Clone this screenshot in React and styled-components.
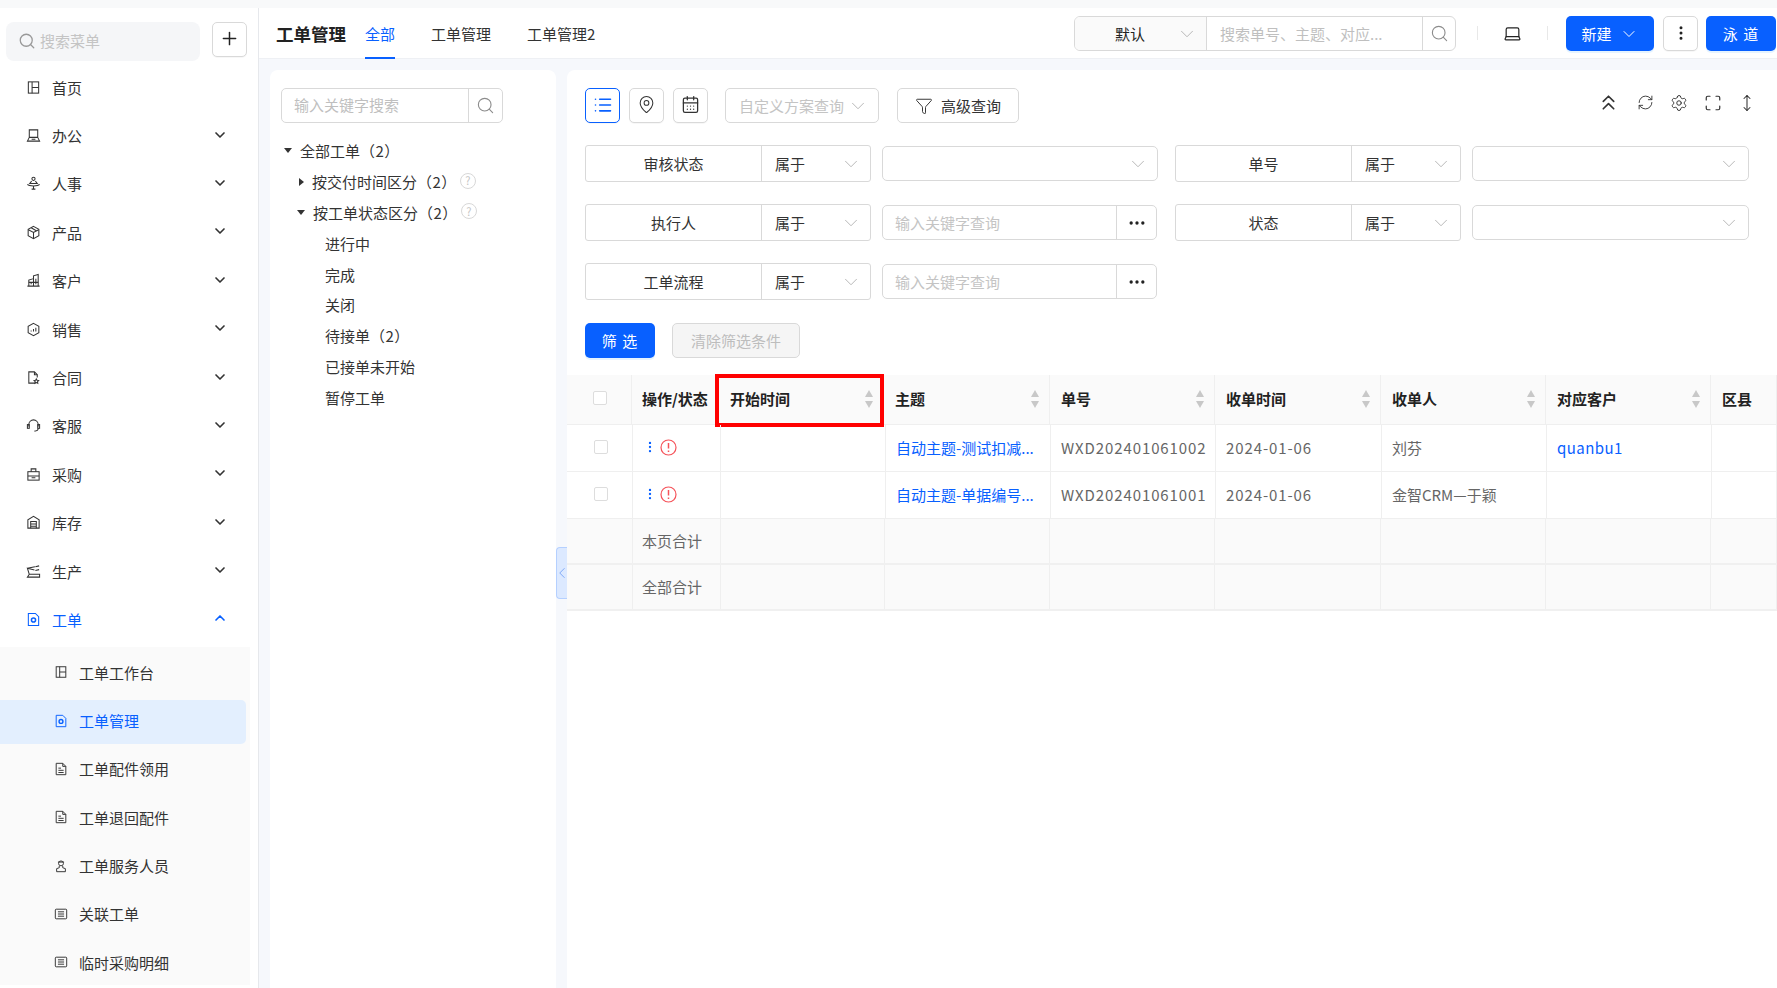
import React from 'react'
import styled, { createGlobalStyle } from 'styled-components'
import { Search, Plus, ChevronDown, ChevronUp, ChevronLeft, Laptop, EllipsisVertical, Ellipsis, List, MapPin, CalendarDays, Funnel, ChevronsUp, RefreshCw, Settings, Maximize, MoveVertical } from 'lucide-react'

const BLUE = '#0860ff'

const GlobalStyle = createGlobalStyle`
  html, body {
    margin: 0;
    height: 100%;
    overflow: hidden;
    background: #fff;
    color: #333;
    font-family: "Noto Sans CJK SC", "Noto Sans", sans-serif;
    font-size: 15px;
  }
  * { box-sizing: border-box; }
`

const Page = styled.div`
  height: 988px;
  display: flex;
  flex-direction: column;
`
const TopStrip = styled.div`
  height: 8px;
  flex: none;
  background: #f8f9fa;
`
const Shell = styled.div`
  flex: 1;
  display: flex;
  min-height: 0;
`

/* sidebar */
const Sidebar = styled.aside`
  width: 259px;
  flex: none;
  border-right: 1px solid #e6e8ec;
  overflow: hidden;
`
const SideSearchRow = styled.div`
  display: flex;
  align-items: flex-start;
  gap: 12px;
  padding: 14px 11px 2px 6px;
`
const SideSearch = styled.div`
  width: 194px;
  height: 39px;
  display: flex;
  align-items: center;
  gap: 4px;
  padding: 0 0 2px 12px;
  border-radius: 8px;
  background: #f5f6f8;
  color: #c4c4c4;
  svg { color: #999; }
`
const SquareButton = styled.button`
  width: 35px;
  height: 35px;
  padding: 0 0 2px;
  display: flex;
  align-items: center;
  justify-content: center;
  background: #fff;
  color: #222;
  border: 1px solid #d9d9d9;
  border-radius: 5px;
  box-shadow: 0 1px 0 rgba(0, 0, 0, 0.03);
`
const MenuRow = styled.div`
  height: 48.4px;
  display: flex;
  align-items: center;
  gap: 11px;
  padding: 0 30px 0 26px;
  color: ${p => (p.$active ? BLUE : '#333')};
  svg.caret { margin-left: auto; margin-top: -2px; color: ${p => (p.$active ? BLUE : '#333')}; }
`
const SubMenu = styled.div`
  width: 250px;
  margin-top: 3px;
  padding-top: 4.5px;
  display: flex;
  flex-direction: column;
  gap: 4.33px;
  background: #fafafa;
`
const SubRow = styled.div`
  width: 246px;
  height: 44px;
  display: flex;
  align-items: center;
  gap: 11px;
  padding: 0 0 2px 54px;
  border-radius: 0 5px 5px 0;
  color: ${p => (p.$active ? BLUE : '#333')};
  background: ${p => (p.$active ? '#e3effe' : 'transparent')};
`

/* header */
const Main = styled.main`
  flex: 1;
  min-width: 0;
  display: flex;
  flex-direction: column;
`
const Header = styled.header`
  height: 51px;
  flex: none;
  display: flex;
  align-items: flex-start;
  padding: 8px 1px 0 17px;
  border-bottom: 1px solid #eef0f4;
`
const Title = styled.div`
  font-size: 17.5px;
  font-weight: 700;
  line-height: 35px;
  color: #222;
  margin-right: 19px;
`
const Tabs = styled.div`
  display: flex;
  gap: 36px;
`
const Tab = styled.div`
  height: 43px;
  line-height: 35px;
  color: ${p => (p.$active ? BLUE : '#333')};
  border-bottom: 2px solid ${p => (p.$active ? BLUE : 'transparent')};
`
const HeaderTools = styled.div`
  margin-left: auto;
  display: flex;
  align-items: flex-start;
`
const CompoundSearch = styled.div`
  width: 382px;
  height: 35px;
  display: flex;
  border: 1px solid #d9d9d9;
  border-radius: 6px;
  overflow: hidden;
`
const ModeSelect = styled.div`
  width: 132px;
  flex: none;
  display: flex;
  align-items: center;
  padding: 0 8px 0 40px;
  justify-content: space-between;
  background: #fafafa;
  border-right: 1px solid #d9d9d9;
  color: #222;
`
const KeywordText = styled.div`
  flex: 1;
  min-width: 0;
  padding-left: 13px;
  line-height: 33px;
  color: #bfbfbf;
  white-space: nowrap;
  overflow: hidden;
`
const SearchCap = styled.div`
  width: ${p => p.$w}px;
  flex: none;
  display: flex;
  align-items: center;
  justify-content: center;
  border-left: 1px solid #d9d9d9;
  color: #8c8c8c;
`
const Sep = styled.div`
  width: 1px;
  height: 14px;
  margin: 10px ${p => p.$right || 0}px 0 ${p => p.$left || 0}px;
  background: #e8e8e8;
`
const LaptopSlot = styled.div`
  width: 69px;
  height: 35px;
  display: flex;
  align-items: center;
  justify-content: center;
  color: #222;
`
const PrimaryButton = styled.button`
  height: 35px;
  width: ${p => p.$w}px;
  padding: 0;
  display: flex;
  align-items: center;
  justify-content: center;
  gap: 7px;
  font: inherit;
  color: #fff;
  white-space: pre;
  background: ${BLUE};
  border: 0;
  border-radius: 5px;
  box-shadow: 0 2px 0 rgba(5, 145, 255, 0.1);
  letter-spacing: ${p => p.$spaced || 0}px;
`
const GhostButton = styled(SquareButton)`
  margin: 0 8px 0 9px;
  color: #222;
`

/* content */
const Content = styled.div`
  flex: 1;
  min-height: 0;
  display: flex;
  gap: 11px;
  padding: 11px 0 0 11px;
  background: #f6f8fc;
`
const TreePanel = styled.section`
  width: 286px;
  flex: none;
  padding: 18px 11px;
  background: #fff;
  border-radius: 8px 8px 0 0;
`
const TreeSearch = styled.div`
  width: 222px;
  height: 35px;
  display: flex;
  border: 1px solid #d9d9d9;
  border-radius: 5px;
  margin-bottom: 12.5px;
`
const TreeSearchText = styled.div`
  flex: 1;
  padding-left: 12px;
  line-height: 32px;
  color: #bfbfbf;
`
const TreeRow = styled.div`
  height: 30.8px;
  display: flex;
  align-items: center;
  padding-left: ${p => p.$indent}px;
  color: #333;
  white-space: nowrap;
`
const Arrow = styled.i`
  width: 0;
  height: 0;
  margin-right: 8px;
  border-style: solid;
  border-color: transparent;
  ${p => p.$open
    ? 'border-width: 5px 4px 0; border-top-color: #333; margin-left: -1px;'
    : 'border-width: 4px 0 4px 5px; border-left-color: #333; margin-left: 1px;'}
`
const Count = styled.span`
  letter-spacing: 0.5px;
`
const HelpMark = styled.span`
  width: 16px;
  height: 16px;
  margin: -2px 0 0 3px;
  display: inline-flex;
  align-items: center;
  justify-content: center;
  border: 1.5px solid #d8d8d8;
  border-radius: 50%;
  color: #c4c4c4;
  font-size: 11px;
  line-height: 1;
`
const ListPanel = styled.section`
  position: relative;
  flex: 1;
  min-width: 0;
  background: #fff;
  border-radius: 8px 0 0 0;
`
const Collapse = styled.div`
  position: absolute;
  left: -11px;
  top: 477px;
  width: 11px;
  height: 52px;
  display: flex;
  align-items: center;
  justify-content: center;
  background: #dce9ff;
  border: 1px solid #b5d0ff;
  border-right: 0;
  border-radius: 4px 0 0 4px;
  color: #7ea9f7;
  svg { flex: none; }
`
const Toolbar = styled.div`
  display: flex;
  align-items: flex-start;
  height: 35px;
  margin: 18px 21px 22px 18px;
`
const ViewButton = styled(SquareButton)`
  margin-right: 9px;
  color: ${p => (p.$active ? BLUE : '#333')};
  border-color: ${p => (p.$active ? BLUE : '#d9d9d9')};
`
const PlanSelect = styled.div`
  width: 154px;
  height: 35px;
  margin-left: 8px;
  display: flex;
  align-items: center;
  justify-content: space-between;
  padding: 0 9px 0 13px;
  border: 1px solid #d9d9d9;
  border-radius: 5px;
  color: #c4c4c4;
  white-space: nowrap;
`
const AdvancedButton = styled.button`
  width: 122px;
  height: 35px;
  margin-left: 18px;
  padding: 0;
  display: flex;
  align-items: center;
  justify-content: center;
  gap: 8px;
  font: inherit;
  color: #333;
  background: #fff;
  border: 1px solid #d9d9d9;
  border-radius: 5px;
`
const TableTools = styled.div`
  margin-left: auto;
  display: flex;
  align-items: center;
  gap: 16px;
  height: 29px;
  color: #333;
`
const FilterGrid = styled.div`
  display: grid;
  grid-template-columns: 573px 574px;
  column-gap: 17px;
  row-gap: 22px;
  padding-left: 18px;
`
const FilterField = styled.div`
  display: flex;
  align-items: center;
  gap: 11px;
  height: 37px;
`
const FieldBox = styled.div`
  width: 286px;
  height: 37px;
  flex: none;
  display: flex;
  border: 1px solid #d9d9d9;
  border-radius: 3px;
`
const FieldLabel = styled.div`
  width: 176px;
  flex: none;
  line-height: 35px;
  text-align: center;
  border-right: 1px solid #d9d9d9;
  color: #333;
`
const OpSelect = styled.div`
  flex: 1;
  display: flex;
  align-items: center;
  justify-content: space-between;
  padding: 0 8px 0 13px;
  color: #333;
`
const ValueSelect = styled.div`
  width: 277px;
  height: 35px;
  display: flex;
  align-items: center;
  justify-content: flex-end;
  padding-right: 8px;
  border: 1px solid #d9d9d9;
  border-radius: 5px;
`
const ValueInput = styled.div`
  width: 275px;
  height: 35px;
  display: flex;
  border: 1px solid #d9d9d9;
  border-radius: 5px;
`
const ValueText = styled.div`
  flex: 1;
  padding-left: 12px;
  line-height: 33px;
  color: #c4c4c4;
`
const MoreCap = styled.div`
  width: 40px;
  display: flex;
  align-items: center;
  justify-content: center;
  border-left: 1px solid #d9d9d9;
  color: #222;
`
const FilterActions = styled.div`
  display: flex;
  gap: 17px;
  margin: 23px 0 17px 18px;
`
const ClearButton = styled.button`
  width: 128px;
  height: 35px;
  padding: 0;
  font: inherit;
  color: #bdbdbd;
  background: #f5f5f5;
  border: 1px solid #d9d9d9;
  border-radius: 5px;
`
const TableRow = styled.div`
  display: grid;
  grid-template-columns: ${p => p.$cols};
  height: ${p => p.$h}px;
  background: ${p => p.$bg || '#fff'};
  border-bottom: ${p => p.$rule || 1}px solid ${p => (p.$rule ? '#f0f0f0' : '#efefef')};
`
const Cell = styled.div`
  position: relative;
  min-width: 0;
  display: flex;
  align-items: center;
  gap: 3px;
  padding: 0 10px 2px;
  border-right: 1px solid #efefef;
  color: ${p => (p.$link ? BLUE : '#666')};
  white-space: nowrap;
  overflow: hidden;
  letter-spacing: ${p => p.$track || 0}px;
`
const SumCell = styled(Cell)`
  padding-left: 9px;
`
const CheckCell = styled(Cell)`
  padding: 0 0 2px 2px;
  justify-content: center;
`
const HeadCell = styled(Cell)`
  padding: 0 ${p => (p.$boxed ? '12px' : '11px')} 2px;
  color: #222;
  font-weight: 600;
  overflow: visible;
  letter-spacing: 0;
  ${p => p.$boxed && `
    &::after {
      content: '';
      position: absolute;
      inset: -1px -1px -3px -3px;
      border: 4px solid #f00;
    }
  `}
`
const ActionHead = styled(HeadCell)`
  padding-left: 10px;
`
const SortMark = styled.span`
  position: absolute;
  right: 10px;
  top: 15px;
  display: flex;
  flex-direction: column;
  gap: 4px;
  &::before, &::after {
    content: '';
    width: 0;
    height: 0;
    border-style: solid;
    border-color: transparent;
  }
  &::before { border-width: 0 4px 7px; border-bottom-color: #c8c8c8; }
  &::after { border-width: 7px 4px 0; border-top-color: #c8c8c8; }
`
const Checkbox = styled.i`
  width: 14px;
  height: 14px;
  background: #fff;
  border: 1px solid #ddd;
  border-radius: 2px;
  margin-top: ${p => (p.$head ? -2 : 0)}px;
`
const Ellip = styled.span`
  overflow: hidden;
  text-overflow: ellipsis;
`
const GlyphSvg = styled.svg`
  flex: none;
  fill: none;
  stroke: currentColor;
  stroke-width: 1.1;
`

function Glyph({ name, size = 15 }) {
  const parts = {
    home: <><rect x="2.5" y="2" width="11" height="12" /><path d="M6.5 2v12M6.5 8h7" /></>,
    office: <><path d="M3.5 2h9v8h-9zM3.5 10l-2 4h13l-2-4" /><path d="M6 12h4" /></>,
    people: <><circle cx="8" cy="3" r="1.7" /><path d="M6 5.5l-2 2.5h8l-2-2.5M1.500 9c2 2.2 11 2.2 13 0M6 14h4M8 10.500V14" /></>,
    box: <><path d="M8 1.500l5.700 3.200v6.600L8 14.500l-5.700-3.200V4.700z" /><path d="M2.500 5L8 8l5.500-3M8 8v6.300M5.500 3l5.500 3.200" /></>,
    building: <><path d="M1.500 14h13M3 14V7.500l5-1.500M8 14V3l5-1.500V14" /><path d="M3 10h10M5.500 10v2M10.500 6v6" /></>,
    sales: <><path d="M8 1.500l5.700 3.200v6.600L8 14.500l-5.700-3.200V4.700z" /><path d="M5.500 10V9M8 10V7.500M10.500 10V6" /></>,
    contract: <><path d="M10 14H3V2h6l3 3v3" /><path d="M9 2v3h3M11 9.500l.8 1.500 1.700.3-1.200 1.200.3 1.700-1.600-.8-1.500.8.300-1.700-1.200-1.200 1.700-.3z" /></>,
    service: <><path d="M3 9V7a5 5 0 0 1 10 0v2" /><rect x="1.500" y="7" width="2" height="4" /><rect x="12.500" y="7" width="2" height="4" /><path d="M13 11c0 2-2 3-4 3" /></>,
    bag: <><rect x="2" y="5" width="12" height="9" /><path d="M5.500 5V2h5v3M2 9.500h12M6 11.500h4" /></>,
    store: <><path d="M2 14V5l6-3.500L14 5v9z" /><path d="M5 14V7h6v7M5 9.500h6M5 12h6" /></>,
    robot: <><path d="M1.500 14h13V11h-11zM3.500 11L1.500 4.500 9 6.500M1.500 4.500l8-1.500M10 3l4-1M10 7l4-1" /></>,
    ticket: <><path d="M2.500 1.500H10l3.500 3.500v9.500h-11z" /><circle cx="8" cy="8.500" r="2.200" strokeWidth="1.600" /></>,
    doc: <><path d="M2.500 1.500H10l3.500 3.500v9.500h-11z" /><path d="M5 7h3M5 9.500h6M5 12h6M10 1.500V5h3.500" /></>,
    worker: <><circle cx="8" cy="5" r="2.800" /><path d="M4.500 3.500h7M6 8v2l-3 1v3.500h10V11l-3-1V8" /></>,
    list: <><rect x="1.500" y="2.500" width="13" height="11" rx="1" /><path d="M4.500 5.500h7M4.500 8h7M4.500 10.500h7" /></>,
  }
  return <GlyphSvg width={size} height={size} viewBox="0 0 16 16">{parts[name]}</GlyphSvg>
}

function AlertMark() {
  return (
    <svg width="17" height="17" viewBox="0 0 17 17" fill="none" stroke="#f5535a" strokeWidth="1.200">
      <circle cx="8.500" cy="8.500" r="7.500" />
      <path d="M8.500 4v5.500M8.500 11.500v1.500" strokeWidth="1.500" />
    </svg>
  )
}

const topMenu = [
  ['home', '首页', false], ['office', '办公', true], ['people', '人事', true], ['box', '产品', true],
  ['building', '客户', true], ['sales', '销售', true], ['contract', '合同', true], ['service', '客服', true],
  ['bag', '采购', true], ['store', '库存', true], ['robot', '生产', true],
]
const subMenu = [
  ['home', '工单工作台'], ['ticket', '工单管理', true], ['doc', '工单配件领用'], ['doc', '工单退回配件'],
  ['worker', '工单服务人员'], ['list', '关联工单'], ['list', '临时采购明细'],
]
const filters = [
  ['审核状态', 'select'], ['单号', 'select'],
  ['执行人', 'input'], ['状态', 'select'],
  ['工单流程', 'input'],
]

const headCols = '65px 86px 166px 166px 165px 166px 165px 165px 1fr'
const bodyCols = '66px 88px 165px 165px 165px 166px 165px 165px 1fr'
const sumCols = '66px 88px 164px 165px 165px 166px 165px 165px 1fr'

const rows = [
  { subject: '自动主题-测试扣减...', no: 'WXD202401061002', date: '2024-01-06', owner: '刘芬', customer: 'quanbu1' },
  { subject: '自动主题-单据编号...', no: 'WXD202401061001', date: '2024-01-06', owner: '金智CRM—于颖', customer: '' },
]

const Thin = () => <ChevronDown size={22} strokeWidth={0.9} color="#aaa" />

export default function App() {
  return (
    <Page>
      <GlobalStyle />
      <TopStrip />
      <Shell>
        <Sidebar>
          <SideSearchRow>
            <SideSearch><Search size={18} strokeWidth={1.7} />搜索菜单</SideSearch>
            <SquareButton><Plus size={21} strokeWidth={1.7} /></SquareButton>
          </SideSearchRow>
          {topMenu.map(([icon, label, more]) => (
            <MenuRow key={label}>
              <Glyph name={icon} />{label}
              {more && <ChevronDown className="caret" size={16} strokeWidth={2.5} />}
            </MenuRow>
          ))}
          <MenuRow $active>
            <Glyph name="ticket" />工单
            <ChevronUp className="caret" size={16} strokeWidth={2.5} />
          </MenuRow>
          <SubMenu>
            {subMenu.map(([icon, label, active]) => (
              <SubRow key={label} $active={active}><Glyph name={icon} size={14} />{label}</SubRow>
            ))}
          </SubMenu>
        </Sidebar>

        <Main>
          <Header>
            <Title>工单管理</Title>
            <Tabs>
              <Tab $active>全部</Tab>
              <Tab>工单管理</Tab>
              <Tab>工单管理2</Tab>
            </Tabs>
            <HeaderTools>
              <CompoundSearch>
                <ModeSelect>默认<Thin /></ModeSelect>
                <KeywordText>搜索单号、主题、对应...</KeywordText>
                <SearchCap $w={33}><Search size={19} strokeWidth={1.4} /></SearchCap>
              </CompoundSearch>
              <Sep $left={21} />
              <LaptopSlot><Laptop size={19} strokeWidth={1.5} /></LaptopSlot>
              <Sep $right={18} />
              <PrimaryButton $w={88}>新建<ChevronDown size={20} strokeWidth={1.2} /></PrimaryButton>
              <GhostButton><EllipsisVertical size={18} strokeWidth={2} /></GhostButton>
              <PrimaryButton $w={70} $spaced={1}>泳 道</PrimaryButton>
            </HeaderTools>
          </Header>

          <Content>
            <TreePanel>
              <TreeSearch>
                <TreeSearchText>输入关键字搜索</TreeSearchText>
                <SearchCap $w={34}><Search size={19} strokeWidth={1.4} /></SearchCap>
              </TreeSearch>
              <TreeRow $indent={4}><Arrow $open />全部工单<Count>（2）</Count></TreeRow>
              <TreeRow $indent={17}><Arrow />按交付时间区分<Count>（2）</Count><HelpMark>?</HelpMark></TreeRow>
              <TreeRow $indent={17}><Arrow $open />按工单状态区分<Count>（2）</Count><HelpMark>?</HelpMark></TreeRow>
              <TreeRow $indent={44}>进行中</TreeRow>
              <TreeRow $indent={44}>完成</TreeRow>
              <TreeRow $indent={44}>关闭</TreeRow>
              <TreeRow $indent={44}>待接单<Count>（2）</Count></TreeRow>
              <TreeRow $indent={44}>已接单未开始</TreeRow>
              <TreeRow $indent={44}>暂停工单</TreeRow>
            </TreePanel>

            <ListPanel>
              <Collapse><ChevronLeft size={18} strokeWidth={1.3} /></Collapse>
              <Toolbar>
                <ViewButton $active><List size={20} strokeWidth={1.9} /></ViewButton>
                <ViewButton><MapPin size={19} strokeWidth={1.3} /></ViewButton>
                <ViewButton><CalendarDays size={19} strokeWidth={1.6} /></ViewButton>
                <PlanSelect>自定义方案查询<Thin /></PlanSelect>
                <AdvancedButton><Funnel size={18} strokeWidth={1.3} />高级查询</AdvancedButton>
                <TableTools>
                  <ChevronsUp size={25} strokeWidth={1.6} />
                  <RefreshCw size={17} strokeWidth={1.3} />
                  <Settings size={18} strokeWidth={1.3} />
                  <Maximize size={18} strokeWidth={1.6} />
                  <MoveVertical size={18} strokeWidth={1.4} />
                </TableTools>
              </Toolbar>

              <FilterGrid>
                {filters.map(([label, kind]) => (
                  <FilterField key={label}>
                    <FieldBox>
                      <FieldLabel>{label}</FieldLabel>
                      <OpSelect>属于<Thin /></OpSelect>
                    </FieldBox>
                    {kind === 'select'
                      ? <ValueSelect><Thin /></ValueSelect>
                      : (
                        <ValueInput>
                          <ValueText>输入关键字查询</ValueText>
                          <MoreCap><Ellipsis size={20} strokeWidth={2} /></MoreCap>
                        </ValueInput>
                      )}
                  </FilterField>
                ))}
              </FilterGrid>

              <FilterActions>
                <PrimaryButton $w={70} $spaced={1}>筛 选</PrimaryButton>
                <ClearButton>清除筛选条件</ClearButton>
              </FilterActions>

              <TableRow $cols={headCols} $h={50} $bg="#fafafa">
                <CheckCell><Checkbox $head /></CheckCell>
                <ActionHead>操作/状态</ActionHead>
                <HeadCell $boxed>开始时间<SortMark /></HeadCell>
                <HeadCell>主题<SortMark /></HeadCell>
                <HeadCell>单号<SortMark /></HeadCell>
                <HeadCell>收单时间<SortMark /></HeadCell>
                <HeadCell>收单人<SortMark /></HeadCell>
                <HeadCell>对应客户<SortMark /></HeadCell>
                <HeadCell>区县</HeadCell>
              </TableRow>
              {rows.map(r => (
                <TableRow key={r.no} $cols={bodyCols} $h={47}>
                  <CheckCell><Checkbox /></CheckCell>
                  <Cell>
                    <EllipsisVertical size={14} strokeWidth={2} color={BLUE} />
                    <AlertMark />
                  </Cell>
                  <Cell />
                  <Cell $link><Ellip>{r.subject}</Ellip></Cell>
                  <Cell $track={0.9}>{r.no}</Cell>
                  <Cell $track={0.9}>{r.date}</Cell>
                  <Cell>{r.owner}</Cell>
                  <Cell $link $track={0.45}>{r.customer}</Cell>
                  <Cell />
                </TableRow>
              ))}
              {['本页合计', '全部合计'].map(label => (
                <TableRow key={label} $cols={sumCols} $h={46} $bg="#fafafa" $rule={2}>
                  <Cell />
                  <SumCell>{label}</SumCell>
                  <Cell /><Cell /><Cell /><Cell /><Cell /><Cell /><Cell />
                </TableRow>
              ))}
            </ListPanel>
          </Content>
        </Main>
      </Shell>
    </Page>
  )
}
